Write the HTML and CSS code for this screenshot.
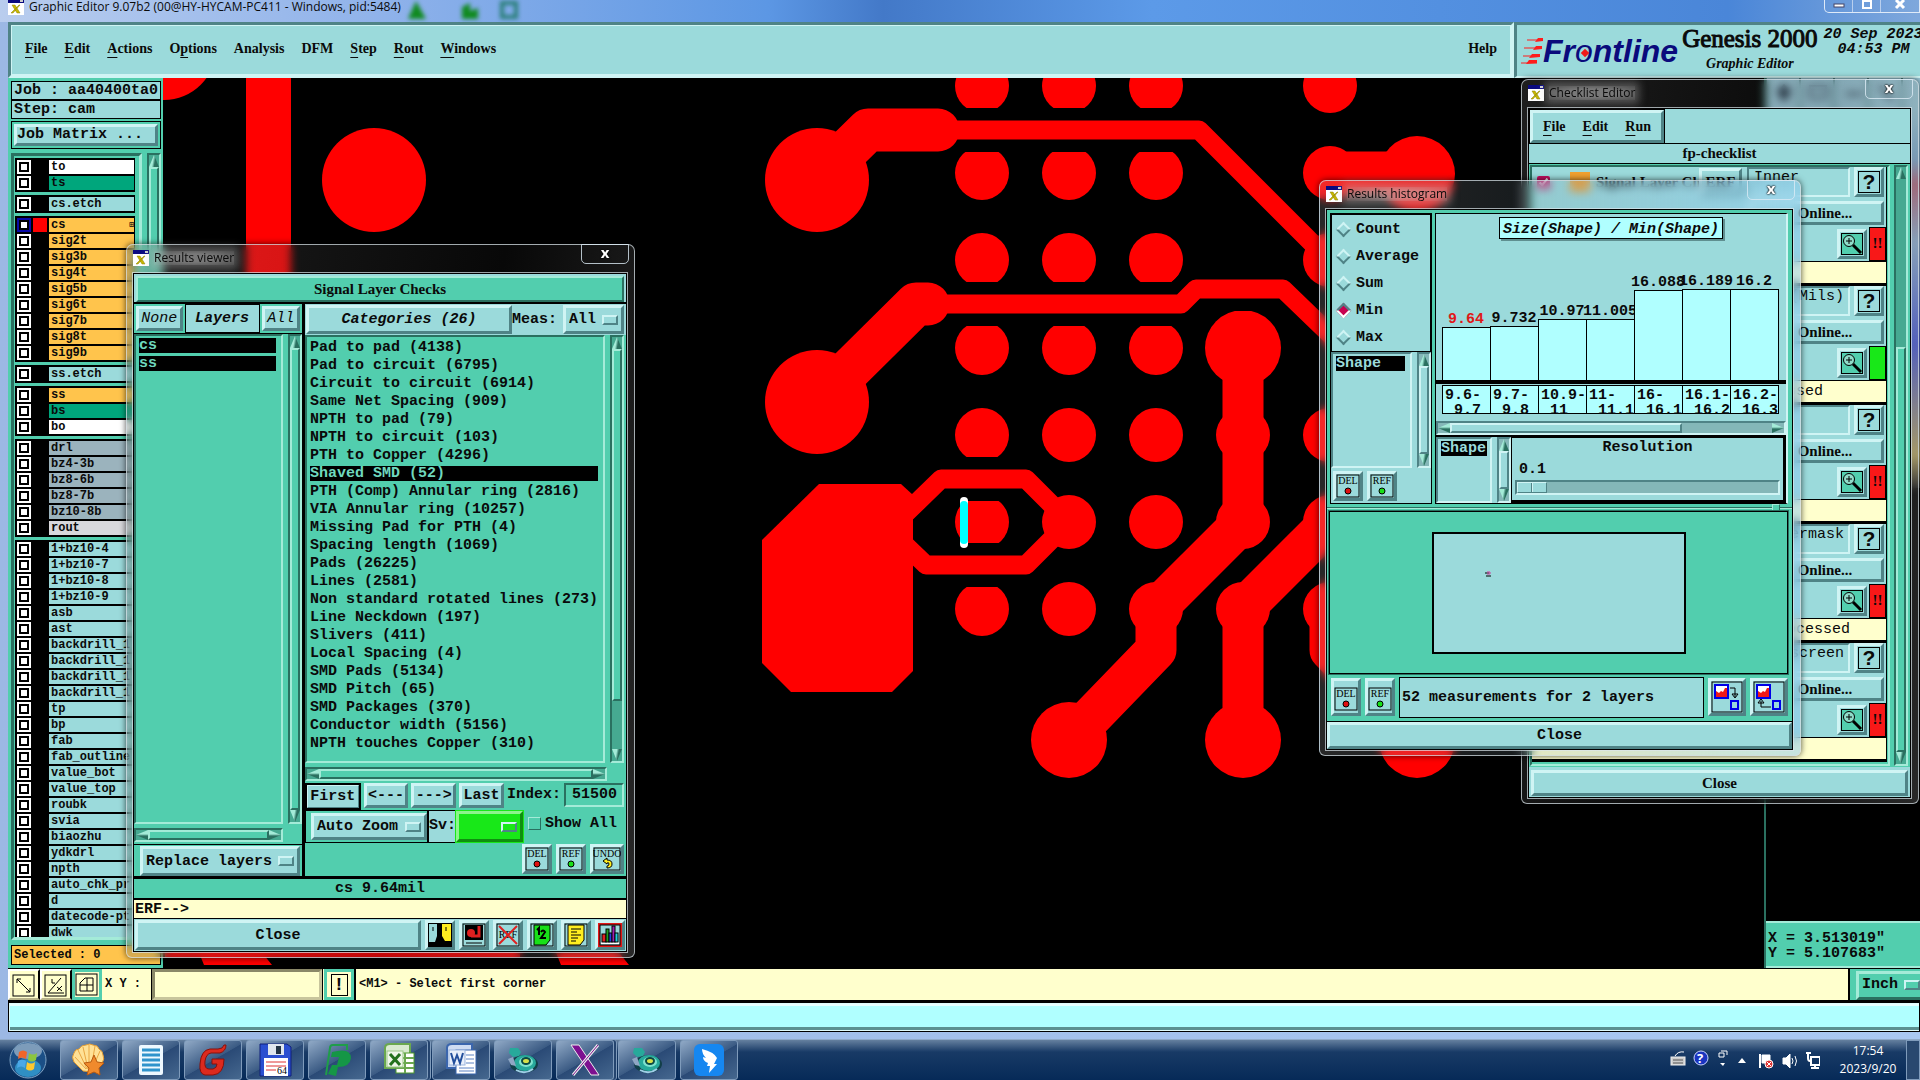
FILE: index.html
```html
<!DOCTYPE html>
<html lang="en">
<head>
    <meta charset="UTF-8">
    <meta name="viewport" content="width=device-width, initial-scale=1.0">
    <title>Graphic Editor</title>
    <link rel="stylesheet" href="styles.css">
</head>
<body>
    <!-- shared icons -->
    <svg class="defs" width="0" height="0">
        <symbol id="xwin" viewBox="0 0 16 16">
            <rect x="0" y="0" width="16" height="16" fill="#fff"/>
            <rect x="0" y="0" width="16" height="4" fill="#0a0a80"/>
            <rect x="12" y="1" width="3" height="2" fill="#ccc"/>
            <path d="M4 6h3l5 8H9zM11 6h1l-7 8H3z" fill="#c9b800" stroke="#8a8000" stroke-width=".5"/>
        </symbol>
        <symbol id="del" viewBox="0 0 24 24">
            <rect x="1" y="1" width="22" height="22" fill="none" stroke="#000"/>
            <text x="12" y="10" class="tiny">DEL</text>
            <circle cx="12" cy="17" r="3" fill="#e01010" stroke="#000"/>
        </symbol>
        <symbol id="ref" viewBox="0 0 24 24">
            <rect x="1" y="1" width="22" height="22" fill="none" stroke="#000"/>
            <text x="12" y="10" class="tiny">REF</text>
            <circle cx="12" cy="17" r="3" fill="#18e018" stroke="#000"/>
        </symbol>
        <symbol id="lens" viewBox="0 0 22 22">
            <rect x=".5" y=".5" width="21" height="21" fill="#52ceae" stroke="#000"/>
            <circle cx="8" cy="8" r="5.5" fill="#8fdcc9" stroke="#000"/>
            <path d="M8 5v6M5 8h6" stroke="#000"/>
            <path d="M12 12l8 8" stroke="#000" stroke-width="3"/>
        </symbol>
        <symbol id="duck" viewBox="0 0 32 32">
            <ellipse cx="17" cy="20" rx="14" ry="9" fill="#123f49"/>
            <ellipse cx="18" cy="19" rx="11" ry="8" fill="#27a99b"/>
            <ellipse cx="19" cy="18" rx="7" ry="5" fill="#7fe3cf"/>
            <ellipse cx="19" cy="17" rx="4" ry="3" fill="#d7e04a" stroke="#0b4a44" stroke-width="2"/>
            <path d="M3 4h8l3 4-2 4-6 1-4-4z" fill="#27a99b"/>
            <path d="M1 15l5-2 3 9-5-1z" fill="#8fa6c4"/>
            <path d="M9 26q9 5 17-1" stroke="#9fd0e8" stroke-width="2" fill="none"/>
        </symbol>
    </svg>

    <main class="app">
        <header class="titlebar">
            <svg class="xicon" width="16" height="16"><use href="#xwin"/></svg>
            <span>Graphic Editor 9.07b2 (00@HY-HYCAM-PC411 - Windows, pid:5484)</span>
            <svg class="ghost" width="140" height="20">
                <path d="M10 0l10 18H2zM56 18V6l8-4v8l8-3v11z" fill="#108a20"/>
                <rect x="96" y="2" width="14" height="14" fill="none" stroke="#2a7f78" stroke-width="4"/>
            </svg>
            <div class="sysbtns">
                <button aria-label="Minimize">
                    <svg width="12" height="12"><rect x="1" y="4" width="10" height="3" fill="#fff" stroke="#446"/></svg>
                </button>
                <button aria-label="Restore">
                    <svg width="12" height="12"><rect x="2" y="1" width="8" height="7" fill="none" stroke="#fff" stroke-width="2"/></svg>
                </button>
                <button class="wide" aria-label="Close window">
                    <svg width="12" height="12"><path d="M2 0l8 8M10 0l-8 8" stroke="#fff" stroke-width="3"/></svg>
                </button>
            </div>
        </header>

        <div class="top">
            <nav class="menubar">
                <button><u>F</u>ile</button>
                <button><u>E</u>dit</button>
                <button><u>A</u>ctions</button>
                <button>O<u>p</u>tions</button>
                <button>Analysis</button>
                <button>DFM</button>
                <button><u>S</u>tep</button>
                <button><u>R</u>out</button>
                <button><u>W</u>indows</button>
                <button class="help">Help</button>
            </nav>
            <div class="brand">
                <div class="logo">
                    <svg width="22" height="28">
                        <path d="M6 3h16M3 11h18M2 19h16M0 26h16" stroke="#ff1c1c" stroke-width="1"/>
                        <path d="M14 5l3-4h5v3zM12 13l3-4h6v3zM8 21l3-4h8v3zM5 27l3-4h8v3z" fill="#ff1c1c"/>
                    </svg>
                    <span class="wordmark">Fr<span class="ring">o</span>ntline</span>
                </div>
                <div class="product">
                    <p class="genesis">Genesis 2000</p>
                    <p class="sub">Graphic Editor</p>
                </div>
                <div class="date">
                    <p>20 Sep 2023</p>
                    <p>04:53 PM</p>
                </div>
            </div>
        </div>

        <div class="work">
            <aside class="sidebar">
                <p class="job">Job : aa40400ta0</p>
                <p class="job">Step: cam</p>
                <div class="matrix"><button class="bevel">Job Matrix ...</button></div>
                <div class="layers-wrap">
                    <div class="layers">
                        <div class="group">
                            <label><input type="checkbox"><i></i><span class="white">to</span></label>
                            <label><input type="checkbox"><i></i><span class="jade">ts</span></label>
                        </div>
                        <div class="group">
                            <label><input type="checkbox"><i></i><span>cs.etch</span></label>
                        </div>
                        <div class="group">
                            <label class="active"><input type="checkbox"><i></i><span class="orange">cs<b>⊞</b></span></label>
                            <label><input type="checkbox"><i></i><span class="orange">sig2t</span></label>
                            <label><input type="checkbox"><i></i><span class="orange">sig3b</span></label>
                            <label><input type="checkbox"><i></i><span class="orange">sig4t</span></label>
                            <label><input type="checkbox"><i></i><span class="orange">sig5b</span></label>
                            <label><input type="checkbox"><i></i><span class="orange">sig6t</span></label>
                            <label><input type="checkbox"><i></i><span class="orange">sig7b</span></label>
                            <label><input type="checkbox"><i></i><span class="orange">sig8t</span></label>
                            <label><input type="checkbox"><i></i><span class="orange">sig9b</span></label>
                        </div>
                        <div class="group">
                            <label><input type="checkbox"><i></i><span>ss.etch</span></label>
                        </div>
                        <div class="group">
                            <label><input type="checkbox"><i></i><span class="orange">ss</span></label>
                            <label><input type="checkbox"><i></i><span class="jade">bs</span></label>
                            <label><input type="checkbox"><i></i><span class="white">bo</span></label>
                        </div>
                        <div class="group">
                            <label><input type="checkbox"><i></i><span class="slate">drl</span></label>
                            <label><input type="checkbox"><i></i><span class="slate">bz4-3b</span></label>
                            <label><input type="checkbox"><i></i><span class="slate">bz8-6b</span></label>
                            <label><input type="checkbox"><i></i><span class="slate">bz8-7b</span></label>
                            <label><input type="checkbox"><i></i><span class="slate">bz10-8b</span></label>
                            <label><input type="checkbox"><i></i><span class="gray">rout</span></label>
                        </div>
                        <div class="group">
                            <label><input type="checkbox"><i></i><span>1+bz10-4</span></label>
                            <label><input type="checkbox"><i></i><span>1+bz10-7</span></label>
                            <label><input type="checkbox"><i></i><span>1+bz10-8</span></label>
                            <label><input type="checkbox"><i></i><span>1+bz10-9</span></label>
                            <label><input type="checkbox"><i></i><span>asb</span></label>
                            <label><input type="checkbox"><i></i><span>ast</span></label>
                            <label><input type="checkbox"><i></i><span>backdrill_1</span></label>
                            <label><input type="checkbox"><i></i><span>backdrill_1</span></label>
                            <label><input type="checkbox"><i></i><span>backdrill_1</span></label>
                            <label><input type="checkbox"><i></i><span>backdrill_1</span></label>
                            <label><input type="checkbox"><i></i><span>tp</span></label>
                            <label><input type="checkbox"><i></i><span>bp</span></label>
                            <label><input type="checkbox"><i></i><span>fab</span></label>
                            <label><input type="checkbox"><i></i><span>fab_outline</span></label>
                            <label><input type="checkbox"><i></i><span>value_bot</span></label>
                            <label><input type="checkbox"><i></i><span>value_top</span></label>
                            <label><input type="checkbox"><i></i><span>roubk</span></label>
                            <label><input type="checkbox"><i></i><span>svia</span></label>
                            <label><input type="checkbox"><i></i><span>biaozhu</span></label>
                            <label><input type="checkbox"><i></i><span>ydkdrl</span></label>
                            <label><input type="checkbox"><i></i><span>npth</span></label>
                            <label><input type="checkbox"><i></i><span>auto_chk_pr</span></label>
                            <label><input type="checkbox"><i></i><span>d</span></label>
                            <label><input type="checkbox"><i></i><span>datecode-pt</span></label>
                            <label><input type="checkbox"><i></i><span>dwk</span></label>
                        </div>
                    </div>
                    <div class="vscroll"><i class="up"></i><i class="thumb"></i><i class="down"></i></div>
                </div>
                <p class="selected">Selected : 0</p>
            </aside>

            <div class="canvas">
                <svg width="100%" height="100%">
                    <g transform="translate(-163 -78)" fill="#f00">
                        <circle cx="164" cy="48" r="52"/>
                        <rect x="246" y="70" width="45" height="840"/>
                        <circle cx="374" cy="180" r="52"/>
                        <path d="M165 900h355v57H165zM198 950h62l12 15h-68zM555 950h62l12 15h-68z"/>
                        <!-- bga pads -->
                        <g>
                            <circle cx="982" cy="86" r="27"/><circle cx="1069" cy="86" r="27"/><circle cx="1156" cy="86" r="27"/>
                            <circle cx="982" cy="173" r="27"/><circle cx="1069" cy="173" r="27"/><circle cx="1156" cy="173" r="27"/>
                            <circle cx="982" cy="260" r="27"/><circle cx="1069" cy="260" r="27"/><circle cx="1156" cy="260" r="27"/>
                            <circle cx="982" cy="348" r="27"/><circle cx="1069" cy="348" r="27"/><circle cx="1156" cy="348" r="27"/>
                            <circle cx="982" cy="435" r="27"/><circle cx="982" cy="522" r="27"/><circle cx="982" cy="609" r="27"/>
                            <circle cx="1243" cy="348" r="38"/>
                        </g>
                        <!-- clearance around the traces -->
                        <g fill="none" stroke="#000" stroke-width="44">
                            <path d="M938 130H1199L1330 261M928 304H1181L1196 289H1283L1330 336"/>
                            <path d="M905 514L941 479H1026L1050 503M900 540L926 565H1026L1050 541"/>
                        </g>
                        <g>
                            <circle cx="1069" cy="435" r="27"/><circle cx="1156" cy="435" r="27"/><circle cx="1243" cy="435" r="27"/>
                            <circle cx="1069" cy="522" r="27"/><circle cx="1156" cy="522" r="27"/><circle cx="1243" cy="522" r="27"/>
                            <circle cx="1069" cy="609" r="27"/><circle cx="1156" cy="609" r="27"/><circle cx="1243" cy="609" r="27"/>
                            <circle cx="1330" cy="86" r="27"/><circle cx="1330" cy="173" r="27"/><circle cx="1330" cy="260" r="27"/>
                            <circle cx="1330" cy="435" r="27"/><circle cx="1330" cy="522" r="27"/><circle cx="1330" cy="609" r="27"/>
                            <circle cx="817" cy="180" r="52"/><circle cx="817" cy="402" r="52"/>
                            <circle cx="1069" cy="740" r="38"/><circle cx="1243" cy="740" r="38"/>
                            <circle cx="1417" cy="740" r="38"/><circle cx="1417" cy="174" r="38"/>
                            <path d="M819 484H901L913 495V671L892 692H791L762 663V540z"/>
                        </g>
                        <g fill="none" stroke="#f00" stroke-linejoin="round" stroke-linecap="round">
                            <g stroke-width="43">
                                <path d="M817 180L868 130H938M817 402L916 304H928"/>
                                <path d="M1330 173H1417"/>
                            </g>
                            <g stroke-width="41">
                                <path d="M1243 348V522L1156 609V650L1069 740"/>
                                <path d="M1330 522L1243 609V740M1330 609V650L1417 740"/>
                            </g>
                            <g stroke-width="19">
                                <path d="M938 130H1199L1330 261M928 304H1181L1196 289H1283L1340 344"/>
                                <path d="M905 514L941 479H1026L1069 522M900 540L926 565H1026L1069 522"/>
                            </g>
                        </g>
                        <path d="M964 501V544" stroke="#fff" stroke-width="8" stroke-linecap="round"/>
                        <path d="M964 505V540" stroke="#0ff" stroke-width="8" stroke-linecap="round"/>
                    </g>
                </svg>
            </div>

            <aside class="rightbar">
                <div class="tools">
                    <svg width="156" height="34">
                        <path d="M0 0v34M34 0v34M68 0v34M102 0v34M136 0v34" stroke="#4f8082" stroke-width="2"/>
                        <path d="M18 6l9 9h-5v7h-8v-7H9z" fill="#234"/>
                        <rect x="44" y="8" width="16" height="12" fill="none" stroke="#345" stroke-width="2"/>
                        <path d="M80 16h16M114 8l12 14" stroke="#345" stroke-width="3"/>
                    </svg>
                </div>
                <div class="overview"></div>
                <div class="coords">
                    <p>X = 3.513019"</p>
                    <p>Y = 5.107683"</p>
                </div>
            </aside>
        </div>

        <div class="prompt">
            <button class="tool" aria-label="Snap corner">
                <svg width="24" height="24" fill="none" stroke="#000"><rect x="1" y="1" width="21" height="21"/><path d="M5 5l13 13M5 9V5h4M18 14v4h-4"/></svg>
            </button>
            <button class="tool" aria-label="Angle">
                <svg width="24" height="24" fill="none" stroke="#000"><rect x="1" y="1" width="21" height="21"/><path d="M4 19L17 4M4 19h16M8 5v4h3M13 17l5-5M13 13l5 4"/></svg>
            </button>
            <button class="tool on" aria-label="Grid">
                <svg width="24" height="24" fill="none" stroke="#000"><rect x="1" y="1" width="21" height="21"/><path d="M5 18V10l5-5h8v13zM5 12h13M12 5v13"/></svg>
            </button>
            <label for="xy">X Y :</label>
            <input id="xy" type="text">
            <button class="tool on bang"><span>!</span></button>
            <p class="msg">&lt;M1&gt; - Select first corner</p>
            <span class="unit"><span class="option green"><select aria-label="Units"><option>Inch</option></select></span></span>
        </div>
        <div class="status"><div></div></div>
    </main>

    <footer class="taskbar">
        <button class="orb" aria-label="Start">
            <svg width="38" height="38" viewBox="0 0 38 38">
                <circle cx="19" cy="19" r="18" fill="#1b4f86" stroke="#7fa3c4"/>
                <ellipse cx="19" cy="27" rx="13" ry="9" fill="#2f8fc4"/>
                <ellipse cx="19" cy="10" rx="14" ry="8" fill="#7d9cba"/>
                <path d="M10 11q4-3 8 0l-1 7q-4-3-8 0z" fill="#f0652a"/>
                <path d="M20 12q4 3 8 0l-1 7q-4 3-8 0z" fill="#8cc63e"/>
                <path d="M9 20q4-3 8 0l-1 7q-4-3-8 0z" fill="#4aa8e8"/>
                <path d="M18 21q4 3 8 0l-1 7q-4 3-8 0z" fill="#fdc82f"/>
            </svg>
        </button>
        <button aria-label="Shell">
            <svg width="34" height="34" viewBox="0 0 34 34">
                <path d="M11 28L2 19Q-1 14 2 10 3 6 7 6q2-4 7-4 4-2 7 0 5 0 6 4 4 2 4 6 2 4-1 8L20 29z" fill="#ffe196" stroke="#e09a32"/>
                <path d="M14 26L3 14M15 26L6 7M16 26L11 4M17 26V2M19 26l4-23M21 24l7-16" stroke="#e9a742"/>
                <path d="M22 12l3 7 7 1-5 5 1 7-6-3-7 3 2-7-5-5 7-1z" fill="#f08a2c" stroke="#b85a10"/>
            </svg>
        </button>
        <button aria-label="Notes">
            <svg width="28" height="32"><rect x="2" y="1" width="24" height="30" rx="2" fill="#eef8ff"/><path d="M5 6h18M5 11h18M5 16h18M5 21h18M5 26h18" stroke="#2f93cc" stroke-width="3"/></svg>
        </button>
        <button aria-label="Genesis">
            <svg width="30" height="32"><path d="M28 1q0 6-6 8h-9q-5 1-6 8-1 8 4 8h4q4-1 4-5h-5v-5h12q0 15-11 16H7Q1 30 2 20 3 6 12 5h8q5 0 6-4z" fill="#dc2a1e" stroke="#8a100a"/></svg>
        </button>
        <button aria-label="Save">
            <svg width="34" height="34">
                <path d="M2 1h27l4 3v29H2z" fill="#2a4fd0" stroke="#10207a"/>
                <rect x="10" y="1" width="16" height="11" fill="#dfe6ee"/><rect x="18" y="3" width="5" height="8" fill="#234"/>
                <rect x="6" y="15" width="24" height="18" fill="#fff"/>
                <path d="M8 19h20M8 23h20M8 27h10" stroke="#d33"/>
                <text x="24" y="31" class="tiny">64</text>
            </svg>
        </button>
        <button aria-label="Project">
            <svg width="32" height="34"><path d="M5 32L9 5q0-3 3-3h14v5" fill="none" stroke="#1f9d4a" stroke-width="2"/><path d="M11 9q19-5 19 6-1 9-13 9l-2 9-8-2 4-9h5l2-8h-8z" fill="#159646"/></svg>
        </button>
        <button class="stack" aria-label="Excel">
            <svg width="34" height="34">
                <path d="M3 5q0-4 5-4h20v24H3z" fill="#d9ead0" stroke="#6aa84f" stroke-width="2"/>
                <rect x="14" y="10" width="18" height="20" fill="#fff" stroke="#4c9a2a"/>
                <path d="M14 15h18M14 20h18M14 25h18M23 10v20" stroke="#6aa84f" stroke-width="2"/>
                <rect x="5" y="8" width="16" height="16" fill="#eef6ea" stroke="#9cc889"/><path d="M8 11l10 11M18 11L8 22" stroke="#23711d" stroke-width="3"/>
            </svg>
        </button>
        <button aria-label="Word">
            <svg width="34" height="34">
                <path d="M3 5q0-4 5-4h20v24H3z" fill="#cfdcf2" stroke="#3b66ad" stroke-width="2"/>
                <rect x="12" y="7" width="20" height="24" fill="#fff" stroke="#3b66ad"/>
                <path d="M22 12h8M22 16h8M22 20h8M15 25h15M15 28h15" stroke="#5c83c4"/>
                <rect x="5" y="7" width="16" height="15" fill="#e9f0fb" stroke="#9cb5dd"/><path d="M7 10l3 10 3-8 3 8 3-10" fill="none" stroke="#234f9c" stroke-width="2"/>
            </svg>
        </button>
        <button aria-label="Editor"><svg width="34" height="32"><use href="#duck"/></svg></button>
        <button class="stack" aria-label="X server">
            <svg width="34" height="34"><path d="M3 2h8l20 30h-8z" fill="#7d1090" stroke="#eee"/><path d="M30 2L5 32" stroke="#eee" stroke-width="3"/><path d="M30 2L5 32" stroke="#7d1090"/></svg>
        </button>
        <button aria-label="Editor 2"><svg width="34" height="32"><use href="#duck"/></svg></button>
        <button aria-label="DingTalk">
            <svg width="30" height="32"><rect width="30" height="32" rx="6" fill="#1687f0"/><path d="M8 5q12 3 15 9l-3 6h3l-8 9 1-7h-3l1-3q-5-2-5-6l3 1Q8 10 8 5z" fill="#fff"/></svg>
        </button>

        <div class="tray">
            <svg width="150" height="24" fill="none" stroke="#fff">
                <rect x="1" y="9" width="14" height="8" fill="#ccc" stroke="#eee"/><path d="M3 12h10M3 15h10" stroke="#555"/><path d="M5 8q3-5 9-4"/>
                <circle cx="31" cy="10" r="7" fill="#1a34c0" stroke="#c9d4ff"/>
                <path d="M49 5h5v4h-5zM51 3h6v4" /><path d="M50 15h5l-2 3z" fill="#fff" stroke="none"/>
                <path d="M68 15h8l-4-5z" fill="#fff" stroke="none"/>
                <path d="M90 6v14" stroke-width="2"/><path d="M92 7h8v8h-8z" fill="#fff"/><circle cx="99" cy="16" r="4" fill="#d33"/><path d="M97 14l4 4M101 14l-4 4"/>
                <path d="M113 10h3l4-4v14l-4-4h-3z" fill="#fff"/><path d="M122 10q2 3 0 6M125 8q3 5 0 10"/>
                <path d="M141 9h9v8h-9zM141 20h8M145 17v3M138 5v5q0 3 2 3M136 5h5" stroke-width="2"/>
            </svg>
            <span class="qmark">?</span>
        </div>
        <div class="clock"><p>17:54</p><p>2023/9/20</p></div>
        <button class="peek" aria-label="Show desktop"></button>
    </footer>

    <!-- Results viewer -->
    <section class="win viewer">
        <div class="wtitle">
            <svg width="16" height="16"><use href="#xwin"/></svg><span>Results viewer</span>
            <button class="x dark">x</button>
        </div>
        <div class="wbody">
            <h2 class="check-title"><span>Signal Layer Checks</span></h2>
            <div class="cols">
                <div class="lcol">
                    <div class="lhead">
                        <button class="bevel">None</button>
                        <b>Layers</b>
                        <button class="bevel">All</button>
                    </div>
                    <div class="pane">
                        <ul class="list">
                            <li class="sel">cs</li>
                            <li class="sel">ss</li>
                        </ul>
                        <div class="vscroll"><i class="up"></i><i class="thumb"></i><i class="down"></i></div>
                    </div>
                    <div class="hscroll"><i class="left"></i><i class="thumb"></i><i class="right"></i></div>
                    <div class="replace">
                        <span class="option"><select aria-label="Layer mode"><option>Replace layers</option></select></span>
                    </div>
                </div>
                <div class="rcol">
                    <div class="rhead">
                        <button class="bevel">Categories (26)</button>
                        <label for="meas">Meas:</label>
                        <span class="option"><select id="meas"><option>All</option></select></span>
                    </div>
                    <div class="pane">
                        <ul class="list">
                            <li>Pad to pad (4138)</li>
                            <li>Pad to circuit (6795)</li>
                            <li>Circuit to circuit (6914)</li>
                            <li>Same Net Spacing (909)</li>
                            <li>NPTH to pad (79)</li>
                            <li>NPTH to circuit (103)</li>
                            <li>PTH to Copper (4296)</li>
                            <li class="sel">Shaved SMD (52)</li>
                            <li>PTH (Comp) Annular ring (2816)</li>
                            <li>VIA Annular ring (10257)</li>
                            <li>Missing Pad for PTH (4)</li>
                            <li>Spacing length (1069)</li>
                            <li>Pads (26225)</li>
                            <li>Lines (2581)</li>
                            <li>Non standard rotated lines (273)</li>
                            <li>Line Neckdown (197)</li>
                            <li>Slivers (411)</li>
                            <li>Local Spacing (4)</li>
                            <li>SMD Pads (5134)</li>
                            <li>SMD Pitch (65)</li>
                            <li>SMD Packages (370)</li>
                            <li>Conductor width (5156)</li>
                            <li>NPTH touches Copper (310)</li>
                        </ul>
                        <div class="vscroll part"><i class="up"></i><i class="thumb"></i><i class="down"></i></div>
                    </div>
                    <div class="hscroll"><i class="left"></i><i class="thumb"></i><i class="right"></i></div>
                    <div class="navrow">
                        <button class="bevel first">First</button>
                        <button class="bevel">&lt;---</button>
                        <button class="bevel">---&gt;</button>
                        <button class="bevel">Last</button>
                        <label for="idx">Index:</label>
                        <input id="idx" type="text" value="51500">
                    </div>
                    <div class="zoomrow">
                        <span class="cell"><span class="option"><select aria-label="Zoom"><option>Auto Zoom</option></select></span></span>
                        <span class="cell sv"><label for="sv">Sv:</label><span class="option lime"><select id="sv"><option></option></select></span></span>
                        <label class="showall"><input type="checkbox">Show All</label>
                    </div>
                    <div class="iconrow">
                        <button class="ibtn bevel" aria-label="Delete"><svg width="24" height="24"><use href="#del"/></svg></button>
                        <button class="ibtn bevel" aria-label="Reference"><svg width="24" height="24"><use href="#ref"/></svg></button>
                        <button class="ibtn bevel undo" aria-label="Undo">
                            <svg width="28" height="24"><rect x="1" y="1" width="26" height="22" fill="none" stroke="#000"/><text x="14" y="10" class="tiny">UNDO</text><path d="M10 14l4-3v2q5 0 5 4t-5 4v-2q2 0 2-2t-2-1v1z" fill="#ffee20" stroke="#000"/></svg>
                        </button>
                    </div>
                </div>
            </div>
            <p class="measure">cs 9.64mil</p>
            <p class="erf">ERF--&gt;</p>
            <div class="closerow">
                <button class="bevel close">Close</button>
                <button class="ibtn bevel" aria-label="Contrast">
                    <svg width="24" height="24"><rect width="24" height="24" fill="#000"/><path d="M1 1h8v12l-2 6H1z" fill="#9bdadb"/><path d="M14 1h9v17h-6l-3-5z" fill="#ffee20"/><path d="M5 4v4M18 4v4" stroke="#000"/></svg>
                </button>
                <button class="ibtn bevel" aria-label="Highlight">
                    <svg width="24" height="24"><rect x="1" y="1" width="22" height="22" fill="#9bdadb" stroke="#000"/><rect x="3" y="2" width="18" height="15" fill="#000"/><circle cx="9" cy="10" r="4" fill="#e02020"/><path d="M9 13h8V3" fill="none" stroke="#e02020" stroke-width="3"/><path d="M4 20h16" stroke="#000"/></svg>
                </button>
                <button class="ibtn bevel" aria-label="Hide references">
                    <svg width="24" height="24"><rect x="1" y="1" width="22" height="22" fill="none" stroke="#000"/><text x="12" y="15" class="tiny">REF</text><path d="M3 3l18 18M21 3L3 21" stroke="#e02020" stroke-width="2"/></svg>
                </button>
                <button class="ibtn bevel" aria-label="Pages">
                    <svg width="24" height="24"><rect x="1" y="1" width="22" height="22" fill="none" stroke="#000"/><path d="M4 2h16v15l-4 5H4z" fill="#18e018" stroke="#000"/><path d="M7 7l2-2v7M11 9q2-3 4 0l-4 6h5" fill="none" stroke="#000" stroke-width="2"/></svg>
                </button>
                <button class="ibtn bevel" aria-label="Report">
                    <svg width="24" height="24"><rect x="1" y="1" width="22" height="22" fill="none" stroke="#000"/><path d="M4 2h16v15l-4 5H4z" fill="#ffee20" stroke="#000"/><path d="M7 6h10M7 9h6M7 12h10M7 15h7M7 18h5" stroke="#000"/></svg>
                </button>
                <button class="ibtn bevel hot" aria-label="Histogram">
                    <svg width="24" height="24"><rect width="24" height="24" fill="#e01818"/><rect x="2" y="2" width="20" height="20" fill="#9bdadb" stroke="#000"/><path d="M3 20h18" stroke="#fff" stroke-width="2"/><g stroke="#000"><rect x="4" y="11" width="4" height="8" fill="#e02020"/><rect x="8" y="6" width="3" height="13" fill="#20a020"/><rect x="11" y="10" width="3" height="9" fill="#2040e0"/><rect x="14" y="3" width="3" height="16" fill="#a020b0"/><rect x="17" y="10" width="3" height="9" fill="#20d0e0"/></g></svg>
                </button>
            </div>
        </div>
    </section>

    <!-- Checklist Editor -->
    <section class="win checklist">
        <div class="wtitle">
            <svg width="16" height="16"><use href="#xwin"/></svg><span>Checklist Editor</span>
            <button class="x">x</button>
        </div>
        <div class="wbody">
            <nav class="cmenu">
                <div class="bevel">
                    <button><u>F</u>ile</button>
                    <button><u>E</u>dit</button>
                    <button><u>R</u>un</button>
                </div>
            </nav>
            <h2 class="cname">fp-checklist</h2>
            <div class="citems-wrap">
                <div class="citems">
                    <article>
                        <div class="r1">
                            <input type="checkbox" checked aria-label="Run check"><i class="ico"></i><b>Signal Layer Ch</b><button class="bevel erfbtn">ERF</button>
                            <input type="text" aria-label="Comment" value="Inner"><button class="bevel q"><span>?</span></button>
                        </div>
                        <button class="bevel online">Online...</button>
                        <div class="r3"><button class="ibtn bevel" aria-label="View"><svg width="22" height="22"><use href="#lens"/></svg></button><i class="flag">!!</i></div>
                        <p></p>
                    </article>
                    <article>
                        <div class="r1"><input type="text" aria-label="Comment" value="Drl (Mils)"><button class="bevel q"><span>?</span></button></div>
                        <button class="bevel online">Online...</button>
                        <div class="r3"><button class="ibtn bevel" aria-label="View"><svg width="22" height="22"><use href="#lens"/></svg></button><i class="flag ok"></i></div>
                        <p class="far">Processed</p>
                    </article>
                    <article>
                        <div class="r1"><input type="text" aria-label="Comment"><button class="bevel q"><span>?</span></button></div>
                        <button class="bevel online">Online...</button>
                        <div class="r3"><button class="ibtn bevel" aria-label="View"><svg width="22" height="22"><use href="#lens"/></svg></button><i class="flag">!!</i></div>
                        <p></p>
                    </article>
                    <article>
                        <div class="r1"><input type="text" aria-label="Comment" value="Soldermask"><button class="bevel q"><span>?</span></button></div>
                        <button class="bevel online">Online...</button>
                        <div class="r3"><button class="ibtn bevel" aria-label="View"><svg width="22" height="22"><use href="#lens"/></svg></button><i class="flag">!!</i></div>
                        <p>Processed</p>
                    </article>
                    <article>
                        <div class="r1"><input type="text" aria-label="Comment" value="Silkscreen"><button class="bevel q"><span>?</span></button></div>
                        <button class="bevel online">Online...</button>
                        <div class="r3"><button class="ibtn bevel" aria-label="View"><svg width="22" height="22"><use href="#lens"/></svg></button><i class="flag">!!</i></div>
                        <p></p>
                    </article>
                </div>
                <div class="vscroll low"><i class="up"></i><i class="thumb"></i><i class="down"></i></div>
            </div>
            <button class="bevel cclose">Close</button>
        </div>
    </section>

    <!-- Results histogram -->
    <section class="win histo">
        <div class="wtitle">
            <svg width="16" height="16"><use href="#xwin"/></svg><span>Results histogram</span>
            <button class="x">x</button>
        </div>
        <div class="wbody">
            <div class="hgrid">
                <div class="hleft">
                    <fieldset>
                        <label><input type="radio" name="stat">Count</label>
                        <label><input type="radio" name="stat">Average</label>
                        <label><input type="radio" name="stat">Sum</label>
                        <label><input type="radio" name="stat" checked>Min</label>
                        <label><input type="radio" name="stat">Max</label>
                    </fieldset>
                    <div class="pane pale">
                        <ul class="list"><li class="sel">Shape</li></ul>
                        <div class="vscroll"><i class="up"></i><i class="thumb"></i><i class="down"></i></div>
                    </div>
                    <div class="hicons">
                        <button class="ibtn bevel" aria-label="Delete"><svg width="24" height="24"><use href="#del"/></svg></button>
                        <button class="ibtn bevel" aria-label="Reference"><svg width="24" height="24"><use href="#ref"/></svg></button>
                    </div>
                </div>
                <div class="hright">
                    <div class="chart">
                        <h3>Size(Shape) / Min(Shape)</h3>
                        <div class="bars">
                            <div class="bar red"><span>9.64</span><i style="height: 53px"></i></div>
                            <div class="bar"><span>9.732</span><i style="height: 54px"></i></div>
                            <div class="bar"><span>10.97</span><i style="height: 61px"></i></div>
                            <div class="bar"><span>11.005</span><i style="height: 61px"></i></div>
                            <div class="bar"><span>16.088</span><i style="height: 90px"></i></div>
                            <div class="bar"><span>16.189</span><i style="height: 91px"></i></div>
                            <div class="bar"><span>16.2</span><i style="height: 91px"></i></div>
                        </div>
                        <div class="ranges">
                            <p>9.6-<span>9.7</span></p>
                            <p>9.7-<span>9.8</span></p>
                            <p>10.9-<span>11</span></p>
                            <p>11-<span>11.1</span></p>
                            <p>16-<span>16.1</span></p>
                            <p>16.1-<span>16.2</span></p>
                            <p>16.2-<span>16.3</span></p>
                        </div>
                        <div class="hscroll pale part"><i class="left"></i><i class="thumb"></i><i class="right"></i></div>
                    </div>
                    <div class="res">
                        <div class="pane pale">
                            <ul class="list"><li class="sel">Shape</li></ul>
                            <div class="vscroll"><i class="up"></i><i class="thumb"></i><i class="down"></i></div>
                        </div>
                        <div class="slider">
                            <label for="res">Resolution</label>
                            <output for="res">0.1</output>
                            <input id="res" type="range" value="0">
                        </div>
                    </div>
                </div>
            </div>
            <div class="split"><i></i></div>
            <div class="map">
                <div class="board">
                    <svg width="100%" height="100%"><path d="M51 39h4M52 42h5" stroke="#000"/><path d="M53 38h3v2h-3" stroke="#d040a0" fill="none"/></svg>
                </div>
            </div>
            <div class="hbottom">
                <button class="ibtn bevel" aria-label="Delete"><svg width="24" height="24"><use href="#del"/></svg></button>
                <button class="ibtn bevel" aria-label="Reference"><svg width="24" height="24"><use href="#ref"/></svg></button>
                <p>52 measurements for 2 layers</p>
                <button class="ibtn bevel" aria-label="Zoom in selection">
                    <svg width="32" height="32"><rect x="1" y="1" width="30" height="30" fill="none" stroke="#000"/><rect x="4" y="4" width="13" height="13" fill="#fff" stroke="#0000e8" stroke-width="2"/><path d="M5 16V10l3 2 2-2 2 1 2-4h2v9z" fill="#f01818"/><rect x="20" y="20" width="7" height="8" fill="none" stroke="#0000e8" stroke-width="2"/><path d="M19 7h5v9M21 13l3 4 3-4z" fill="none" stroke="#000"/></svg>
                </button>
                <button class="ibtn bevel" aria-label="Zoom out selection">
                    <svg width="32" height="32"><rect x="1" y="1" width="30" height="30" fill="none" stroke="#000"/><rect x="4" y="4" width="13" height="13" fill="#fff" stroke="#0000e8" stroke-width="2"/><path d="M5 16V10l3 2 2-2 2 1 2-4h2v9z" fill="#f01818"/><rect x="20" y="20" width="7" height="8" fill="none" stroke="#0000e8" stroke-width="2"/><path d="M18 26H8v-6M5 22l3-4 3 4z" fill="none" stroke="#000"/></svg>
                </button>
            </div>
            <button class="bevel hclose">Close</button>
        </div>
    </section>
</body>
</html>
```
FILE: styles.css
```css
* {
  box-sizing: border-box;
}

body {
  margin: 0;
  height: 100vh;
  overflow: hidden;
  display: flex;
  flex-direction: column;
  position: relative;
  background: #6f9fe0;
  font-family: "Liberation Mono", monospace;
  font-size: 15px;
  font-weight: bold;
  color: #0a0a0a;
}

p, h2, h3, ul {
  margin: 0;
  padding: 0;
  list-style: none;
  font-size: inherit;
}

button, input, select {
  font: inherit;
  color: inherit;
  margin: 0;
  padding: 0;
  border: none;
  border-radius: 0;
  background: none;
}

.defs {
  position: absolute;
}

.tiny {
  font: 10px "Liberation Serif", serif;
  text-anchor: middle;
  fill: #000;
  stroke: none;
}

.bevel {
  background: #9bdadb;
  border: 3px solid;
  border-color: #cff4f4 #4f8386 #4f8386 #cff4f4;
}

/* main window */
.app {
  flex: 1;
  min-height: 0;
  display: flex;
  flex-direction: column;
  padding: 0 0 7px 8px;
  background: linear-gradient(90deg, #9cb8e4, #a9c8f2);
}

.titlebar {
  height: 22px;
  margin-left: -8px;
  padding-left: 8px;
  display: flex;
  align-items: center;
  gap: 5px;
  background: linear-gradient(90deg, #b9cdee, #8fb2ea 20%, #5c97e4 40%, #4379c8 46%, #5c9ae8 60%, #4a86d8 90%, #7fa8dc);
  font: 12px/14px "Open Sans", sans-serif;
  position: relative;
}

.titlebar span,
.titlebar .xicon {
  margin-bottom: 8px;
}

.ghost {
  filter: blur(2px);
}

.sysbtns {
  position: absolute;
  right: 0;
  top: 0;
  display: flex;
  height: 13px;
  border: 1px solid #dfeaf8;
  border-top: none;
  border-radius: 0 0 0 5px;
}

.sysbtns button {
  width: 28px;
  border-right: 1px solid #b9cfee;
  line-height: 0;
}

.sysbtns .wide {
  width: 38px;
  border: none;
}

.top {
  display: flex;
  height: 56px;
  background: #9bdadb;
}

.menubar {
  flex: 1;
  display: flex;
  align-items: center;
  gap: 17px;
  padding: 0 14px 2px;
  border: 3px solid;
  border-color: #4f8386 #cff4f4 #cff4f4 #4f8386;
  outline: 1px solid #cff4f4;
  outline-offset: -4px;
  font: bold 14px/20px "Liberation Serif", serif;
}

.menubar .help {
  margin-left: auto;
}

u {
  text-underline-offset: 4px;
}

.brand {
  width: 406px;
  display: flex;
  overflow: hidden;
  border-top: 3px solid #4f8386;
  border-left: 3px solid #4f8386;
  border-bottom: 2px solid #cff4f4;
}

.logo {
  display: flex;
  align-items: center;
  padding-left: 4px;
}

.wordmark {
  font: italic bold 32px/36px "Liberation Sans", sans-serif;
  color: #0a0a7c;
}

.logo svg {
  flex: none;
}

.ring {
  position: relative;
  font-weight: normal;
}

.ring::after {
  content: "";
  position: absolute;
  left: 7px;
  top: 17px;
  width: 6px;
  height: 6px;
  background: #f01818;
  transform: rotate(45deg);
}

.product {
  text-align: center;
  white-space: nowrap;
  padding-left: 4px;
}

.genesis {
  font: 25px/28px "Liberation Serif", serif;
  -webkit-text-stroke: 1px #0a0a0a;
}

.sub {
  font: italic bold 14px/22px "Liberation Serif", serif;
}

.date {
  font-style: italic;
  line-height: 15px;
  padding: 2px 0 0 6px;
  white-space: nowrap;
}

.date p + p {
  padding-left: 14px;
}

.work {
  flex: 1;
  min-height: 0;
  display: flex;
}

/* layer list */
.sidebar {
  width: 155px;
  display: flex;
  flex-direction: column;
  background: #52ceae;
  padding: 3px 2px 3px 3px;
}

.job {
  height: 19px;
  line-height: 17px;
  border: 1px solid #000;
  background: #9bdadb;
  padding-left: 2px;
  white-space: nowrap;
}

.matrix {
  margin: 2px 0 4px;
  padding: 2px;
  border: 1px solid #000;
}

.matrix button {
  width: 100%;
  height: 22px;
  line-height: 16px;
  text-align: left;
}

.layers-wrap {
  flex: 1;
  min-height: 0;
  display: flex;
  gap: 5px;
}

.layers {
  flex: 1;
  overflow: hidden;
  border: 3px solid;
  border-color: #2a7060 #a4ebd8 #a4ebd8 #2a7060;
  padding: 2px 4px 0 1px;
  font-size: 12px;
  line-height: 14px;
}

.group {
  background: #000;
  padding: 2px 1px 0 2px;
  margin-bottom: 3px;
}

.group label {
  display: flex;
  padding-bottom: 2px;
}

.group input {
  appearance: none;
  width: 14px;
  height: 14px;
  background: #fff;
  box-shadow: inset 0 0 0 2px #fff, inset 0 0 0 4px #000;
}

.group i {
  width: 14px;
  margin: 0 2px;
}

.active input {
  box-shadow: inset 0 0 0 2px #0a0aa8, inset 0 0 0 4px #000;
}

.active i {
  background: #f00;
}

.group span {
  flex: 1;
  height: 14px;
  padding-left: 2px;
  background: #9bdadb;
  overflow: hidden;
}

.group b {
  float: right;
  font-size: 8px;
}

.group .white { background: #fff; }
.group .jade { background: #00a67c; }
.group .orange { background: #ffc44c; }
.group .slate { background: #9bb3bd; }
.group .gray { background: #d8d8dc; }

.selected {
  height: 20px;
  margin-top: 5px;
  border: 1px solid #000;
  background: #ffc44c;
  font-size: 12px;
  line-height: 18px;
  padding-left: 2px;
}

.canvas {
  flex: 1;
  min-width: 0;
  background: #000;
  overflow: hidden;
}

.canvas svg {
  display: block;
}

.rightbar {
  width: 156px;
  display: flex;
  flex-direction: column;
  background: #000;
  border-left: 2px solid #2a7060;
}

.tools {
  height: 410px;
  background: linear-gradient(#9bc8d8 0 8%, #7fa9cc 20%, #b06a80 26%, #8fb0d0 40%, #4a5ad0 65%, #b0a060 92%, #222);
}

.overview {
  flex: 1;
}

.coords {
  border-top: 2px solid #a4ebd8;
  border-bottom: 2px solid #a4ebd8;
  background: #52ceae;
  padding: 8px 2px 5px;
  line-height: 15px;
}

/* scroll bars */
.vscroll, .hscroll {
  display: flex;
  background: #46a991;
  border: 2px solid;
  border-color: #2a7060 #a4ebd8 #a4ebd8 #2a7060;
}

.vscroll {
  width: 14px;
  flex: none;
  flex-direction: column;
}

.hscroll {
  height: 14px;
}

.vscroll .up, .vscroll .down {
  height: 12px;
  background: linear-gradient(100deg, #a4ebd8 40%, #2a7060 60%);
  clip-path: polygon(50% 0, 100% 100%, 0 100%);
}

.vscroll .down {
  clip-path: polygon(0 0, 100% 0, 50% 100%);
}

.hscroll .left, .hscroll .right {
  width: 12px;
  background: linear-gradient(#a4ebd8 40%, #2a7060 60%);
  clip-path: polygon(0 50%, 100% 0, 100% 100%);
}

.hscroll .right {
  clip-path: polygon(0 0, 100% 50%, 0 100%);
}

.thumb {
  flex: 1;
  background: #52ceae;
  border: 2px solid;
  border-color: #a4ebd8 #2a7060 #2a7060 #a4ebd8;
}

.vscroll.part .thumb { margin-bottom: 48px; }
.vscroll.low .thumb { margin-top: 168px; }

.pale .vscroll, .hscroll.pale {
  background: #84b7b8;
  border-color: #4f8386 #cff4f4 #cff4f4 #4f8386;
}

.pale .thumb {
  background: #9bdadb;
  border-color: #cff4f4 #4f8386 #4f8386 #cff4f4;
}

.hscroll.part .thumb { margin-right: 90px; }

/* prompt line */
.prompt {
  display: flex;
  height: 34px;
  border-top: 1px solid #000;
  border-bottom: 2px solid #000;
  background: #ffffcd;
  font-size: 12px;
  line-height: 30px;
}

.tool {
  width: 32px;
  padding: 2px 0 0;
  background: #ffffcd;
  border: 2px solid;
  border-color: #fff #b8b48a #b8b48a #fff;
  border-right-color: #000;
  line-height: 0;
}

.tool.on {
  width: 30px;
  padding: 0;
  border: 3px solid #52ceae;
}

.tool svg {
  display: block;
  margin: 0 auto;
}

.bang span {
  display: block;
  width: 17px;
  margin: 0 auto;
  border: 1px solid #000;
  font: bold 18px/20px "Liberation Mono", monospace;
}

.prompt label {
  width: 50px;
  padding-left: 3px;
  white-space: nowrap;
}

.prompt input {
  width: 170px;
  margin-right: 2px;
  border: 3px solid;
  border-color: #8a8868 #c8c59c #c8c59c #8a8868;
  outline: 1px solid #000;
}

.msg {
  flex: 1;
  padding-left: 3px;
  border-left: 2px solid #000;
}

.unit {
  width: 72px;
  padding: 1px 0 1px 6px;
  background: #52ceae;
  border-left: 2px solid #000;
  font-size: 15px;
}

.unit .option {
  height: 29px;
  width: 80px;
  padding-left: 3px;
}

.option {
  display: inline-flex;
  align-items: center;
  background: #9bdadb;
  border: 3px solid;
  border-color: #cff4f4 #4f8386 #4f8386 #cff4f4;
  padding: 0 3px;
}

.option select {
  appearance: none;
  flex: 1;
  min-width: 0;
  white-space: nowrap;
}

.option::after {
  content: "";
  flex: none;
  width: 12px;
  height: 6px;
  border: 2px solid;
  border-color: #cff4f4 #4f8386 #4f8386 #cff4f4;
}

.option.green {
  background: #52ceae;
  border-color: #a4ebd8 #2a7060 #2a7060 #a4ebd8;
}

.unit .option::after {
  margin-right: 10px;
}

.option.lime {
  background: #18e818;
  border-color: #8cf48c #0f8f0f #0f8f0f #8cf48c;
}

.status {
  height: 30px;
  padding: 1px 0 1px 1px;
  border: 1px solid #000;
  background: #dffafa;
}

.status div {
  height: 100%;
  background: #b0ffff;
  border-bottom: 3px solid #5b9090;
  border-top: 2px solid #e6ffff;
}

/* taskbar */
.taskbar {
  height: 41px;
  display: flex;
  align-items: stretch;
  gap: 4px;
  padding-left: 8px;
  border-top: 1px solid #8fa9c8;
  background: linear-gradient(#65809f, #183a66 30%, #062a58);
}

.taskbar > button {
  width: 58px;
  display: flex;
  align-items: center;
  justify-content: center;
  border: 1px solid #7f9bbb;
  border-radius: 3px;
  background: linear-gradient(150deg, #90a9c6, #3b5b84 50%, #2a4a76 51%, #46688f);
}

.taskbar > .orb {
  width: 40px;
  margin-right: 8px;
  border: none;
  background: none;
}

.taskbar > .stack {
  box-shadow: 2px 0 0 #24446e, 3px 0 0 #7f9bbb;
}

.tray {
  position: relative;
  margin-left: auto;
  padding: 8px 12px 0 0;
}

.qmark {
  position: absolute;
  left: 27px;
  top: 10px;
  font: bold 13px/16px "Open Sans", sans-serif;
  color: #fff;
}

.clock {
  width: 64px;
  padding-top: 2px;
  font: 12px/18px "Open Sans", sans-serif;
  color: #fff;
  text-align: center;
}

.taskbar > .peek {
  width: 14px;
  margin-left: 2px;
  border-radius: 0;
  background: #29486f;
}

/* glass windows */
.win {
  position: absolute;
  display: flex;
  flex-direction: column;
  padding: 0 7px 5px 6px;
  border: 1px solid rgba(210, 220, 225, .75);
  border-radius: 7px 7px 6px 6px;
  background: linear-gradient(100deg, rgba(120, 120, 120, .25), rgba(40, 40, 40, .2) 60%, rgba(160, 160, 160, .25));
  backdrop-filter: blur(4px);
  box-shadow: 0 0 6px rgba(0, 0, 0, .7);
}

.wtitle {
  height: 28px;
  padding-bottom: 2px;
  display: flex;
  align-items: center;
  gap: 5px;
  font: 12px/20px "Open Sans", sans-serif;
  position: relative;
}

.wtitle span {
  background: radial-gradient(rgba(200, 200, 200, .55) 40%, rgba(200, 200, 200, .3));
  box-shadow: 0 0 8px 4px rgba(200, 200, 200, .35);
  line-height: 14px;
}

.x {
  position: absolute;
  right: -2px;
  top: -1px;
  width: 48px;
  height: 20px;
  border: 1px solid rgba(220, 235, 245, .8);
  border-radius: 0 0 5px 5px;
  font: bold 15px/12px "Open Sans", sans-serif;
  padding-bottom: 4px;
  color: #fff;
  text-shadow: 0 0 2px #000, 0 0 2px #000;
}

.wbody {
  flex: 1;
  min-height: 0;
  display: flex;
  flex-direction: column;
  border: 1px solid #000;
  outline: 1px solid rgba(220, 230, 235, .7);
  background: #9bdadb;
}

.viewer {
  left: 126px;
  top: 244px;
  width: 509px;
  height: 714px;
}

.histo {
  right: 119px;
  top: 180px;
  width: 482px;
  height: 576px;
  background: linear-gradient(90deg, rgba(200, 200, 200, .2), rgba(120, 140, 150, .2) 40%, rgba(140, 200, 240, .5));
}

.checklist {
  right: 1px;
  top: 79px;
  width: 398px;
  height: 725px;
}

.check-title {
  height: 30px;
  padding: 2px;
  border-bottom: 2px solid #000;
  font: bold 15px/22px "Liberation Serif", serif;
  text-align: center;
}

.check-title span {
  display: block;
  background: #52ceae;
  border: 2px solid;
  border-color: #a4ebd8 #2a7060 #2a7060 #a4ebd8;
}

.cols {
  flex: 1;
  min-height: 0;
  display: flex;
  background: #52ceae;
}

.lcol {
  width: 171px;
  display: flex;
  flex-direction: column;
  border-right: 3px solid #000;
}

.lhead {
  display: flex;
  height: 30px;
  font-style: italic;
  border-bottom: 1px solid #000;
}

.lhead button {
  margin: 2px;
  flex: 5;
  font-weight: normal;
  line-height: 18px;
}

.lhead button:last-child {
  flex: 4;
}

.lhead b {
  flex: 9;
  line-height: 28px;
  text-align: center;
  background: #9bdadb;
  border: 1px solid #000;
}

.pane {
  flex: 1;
  min-height: 0;
  display: flex;
  gap: 5px;
}

.list {
  flex: 1;
  padding: 2px 5px 2px 3px;
  overflow: hidden;
  border: 2px solid;
  border-color: #2a7060 #a4ebd8 #a4ebd8 #2a7060;
}

.list li {
  height: 15px;
  margin-bottom: 3px;
  line-height: 15px;
  white-space: nowrap;
}

.list .sel {
  background: #000;
  color: #6fd8be;
}

.pale .list {
  border-color: #4f8386 #cff4f4 #cff4f4 #4f8386;
}

.pale .sel {
  color: #9bdadb;
}

.lcol .hscroll, .rcol .hscroll {
  margin: 4px 19px 2px 0;
  flex: none;
}

.replace {
  height: 32px;
  padding: 1px 2px 1px 6px;
  border-top: 1px solid #000;
}

.replace .option {
  width: 100%;
  height: 30px;
}

.rcol {
  flex: 1;
  min-width: 0;
  display: flex;
  flex-direction: column;
}

.rhead {
  display: flex;
  height: 31px;
  padding: 1px 2px 1px 1px;
  background: #9bdadb;
  line-height: 29px;
}

.rhead button {
  flex: 1;
  font-style: italic;
  line-height: 20px;
}

.rhead .option {
  width: 61px;
  margin-left: 6px;
}

.rcol .pane {
  padding-right: 2px;
}

.rcol .list {
  padding-top: 3px;
}

.navrow {
  display: flex;
  gap: 3px;
  height: 27px;
  line-height: 24px;
}

.navrow button {
  width: 45px;
  margin-bottom: 2px;
  white-space: nowrap;
  line-height: 19px;
}

.navrow .first {
  width: 56px;
  margin: 0;
  outline: 2px solid #000;
  outline-offset: -2px;
}

.navrow label {
  flex: 1;
}

.navrow input {
  width: 60px;
  margin: 0 2px 3px 0;
  padding-left: 6px;
  border: 2px solid;
  border-color: #2a7060 #a4ebd8 #a4ebd8 #2a7060;
}

.zoomrow {
  display: flex;
  height: 33px;
}

.cell {
  display: flex;
  border: 1px solid #000;
  padding: 2px 0 2px 5px;
}

.cell .option {
  width: 116px;
}

.sv {
  padding: 0;
  background: #9bdadb;
  line-height: 30px;
}

.sv .option {
  width: 67px;
  outline: 1px solid #18e818;
}

.showall {
  display: flex;
  align-items: center;
  gap: 4px;
  padding: 0 0 6px 4px;
  white-space: nowrap;
}

.showall input {
  appearance: none;
  width: 13px;
  height: 13px;
  border: 1px solid;
  border-color: #a4ebd8 #2a7060 #2a7060 #a4ebd8;
}

.iconrow {
  display: flex;
  justify-content: flex-end;
  gap: 4px;
  padding: 1px 2px;
  height: 33px;
}

.ibtn {
  flex: none;
  width: 30px;
  height: 30px;
  line-height: 0;
}

.ibtn svg {
  display: block;
}

.ibtn.undo {
  width: 34px;
}

.measure {
  height: 22px;
  border-top: 3px solid #000;
  background: #52ceae;
  line-height: 19px;
  text-align: center;
}

.erf {
  height: 21px;
  padding-left: 1px;
  border-top: 2px solid #000;
  border-bottom: 1px solid #000;
  background: #ffffcd;
  line-height: 19px;
}

.closerow {
  display: flex;
  gap: 4px;
  padding: 1px;
}

.closerow .close {
  flex: 1;
}

/* checklist editor */
.checklist .wbody, .cname {
  font-family: "Liberation Serif", serif;
  font-size: 15px;
}

.cmenu {
  height: 35px;
  padding: 1px;
  border-bottom: 1px solid #000;
  font-size: 14px;
}

.cmenu div {
  display: inline-flex;
  gap: 17px;
  height: 33px;
  padding: 0 10px;
  outline: 1px solid #000;
}

.cname {
  height: 20px;
  line-height: 19px;
  text-align: center;
  border-bottom: 1px solid #000;
}

.citems-wrap {
  flex: 1;
  min-height: 0;
  display: flex;
  gap: 4px;
  padding: 1px 2px 1px 1px;
  background: #52ceae;
}

.citems {
  flex: 1;
  overflow: hidden;
  border: 2px solid;
  border-color: #2a7060 #a4ebd8 #a4ebd8 #2a7060;
  padding-right: 1px;
}

.citems article {
  display: flex;
  flex-direction: column;
  align-items: flex-end;
  height: 119px;
  background: #9bdadb;
  border-bottom: 3px solid #000;
  border-right: 1px solid #000;
}

.r1 {
  display: flex;
  align-items: center;
  width: 100%;
  justify-content: flex-end;
  height: 30px;
  padding-right: 2px;
}

.r1 input[type=text] {
  width: 103px;
  height: 30px;
  margin-right: 4px;
  padding: 0 3px 10px 5px;
  border: 2px solid;
  border-color: #4f8386 #cff4f4 #cff4f4 #4f8386;
  font: 15px "Liberation Mono", monospace;
}

.r1 input[type=checkbox] {
  width: 13px;
  height: 13px;
  margin-left: 5px;
  accent-color: #c01060;
}

.ico {
  width: 20px;
  height: 20px;
  margin: 0 6px 0 20px;
  background: #f0a030;
}

.r1 b {
  flex: 1;
  white-space: nowrap;
  overflow: hidden;
}

.erfbtn {
  width: 43px;
  height: 28px;
  margin-right: 5px;
}

.q {
  width: 30px;
  height: 30px;
  padding: 1px;
}

.q span {
  display: block;
  border: 1px solid #000;
  font: bold 21px/20px "Liberation Sans", sans-serif;
}

.online {
  width: 136px;
  height: 24px;
  margin: 4px 2px 2px 0;
  line-height: 17px;
  padding-left: 18px;
}

.r3 {
  display: flex;
  height: 34px;
  gap: 2px;
  align-items: center;
}

.r3 .ibtn {
  padding: 1px;
}

.flag {
  width: 17px;
  height: 34px;
  background: #f81818;
  border: 1px solid #000;
  font-style: normal;
  line-height: 30px;
  text-align: center;
}

.flag.ok {
  background: #18e818;
}

.citems p {
  width: 100%;
  flex: 1;
  background: #ffffcd;
  border-top: 1px solid #000;
  font: 15px/21px "Liberation Mono", monospace;
  text-align: right;
  padding-right: 36px;
}

.citems .far {
  padding-right: 63px;
}

.cclose {
  height: 26px;
  margin: 3px 2px 1px;
}

/* histogram */
.histo .wbody {
  background: #52ceae;
}

.hgrid {
  display: flex;
  gap: 3px;
  padding: 3px 4px 0 3px;
  height: 294px;
}

.hleft {
  width: 102px;
  display: flex;
  flex-direction: column;
  background: #9bdadb;
  border: 1px solid #000;
}

fieldset {
  margin: 0;
  padding: 1px 0 0 4px;
  border: 1px solid #000;
  height: 138px;
}

fieldset label {
  display: flex;
  align-items: center;
  gap: 7px;
  height: 27px;
}

fieldset input {
  appearance: none;
  width: 11px;
  height: 11px;
  margin-left: 2px;
  border: 2px solid;
  border-color: #cff4f4 #4f8386 #4f8386 #cff4f4;
  transform: rotate(45deg);
}

fieldset input:checked {
  background: #c80050;
  border-color: #4f8386 #fff #fff #4f8386;
}

.hicons {
  display: flex;
  gap: 4px;
  padding: 3px 2px 2px;
}

.hright {
  flex: 1;
  min-width: 0;
  display: flex;
  flex-direction: column;
  background: #9bdadb;
  border: 1px solid #000;
  border-right: 2px solid #cff4f4;
}

.chart {
  height: 221px;
  display: flex;
  flex-direction: column;
}

.chart h3 {
  align-self: center;
  height: 22px;
  padding: 0 3px;
  margin-top: 3px;
  border: 1px solid #000;
  background: #b0ffff;
  box-shadow: 2px 2px 0 #5f8f90;
  font-style: italic;
  line-height: 23px;
}

.bars {
  flex: 1;
  display: flex;
  align-items: flex-end;
  padding: 0 8px 0 6px;
  border-bottom: 4px solid #000;
}

.bar {
  flex: 1;
  min-width: 0;
  display: flex;
  flex-direction: column;
  align-items: center;
  line-height: 15px;
}

.bar i {
  align-self: stretch;
  border: 1px solid #000;
  border-bottom: none;
  margin-right: -1px;
  background: #b0ffff;
}

.bar.red span {
  color: #e01818;
}

.ranges {
  display: flex;
  height: 29px;
  margin: 1px 8px 7px 6px;
  line-height: 15px;
}

.ranges p {
  flex: 1;
  min-width: 0;
  padding: 2px 0 0 2px;
  margin-right: -1px;
  border: 1px solid #000;
  background: #b0ffff;
  white-space: nowrap;
}

.ranges span {
  display: block;
  padding-left: 9px;
}

.res {
  flex: 1;
  min-height: 0;
  display: flex;
  border-top: 2px solid #000;
}

.res .pane {
  flex: none;
  width: 75px;
}

.res .list {
  padding-right: 0;
}

.res .sel {
  width: 46px;
}

.slider {
  flex: 1;
  display: flex;
  flex-direction: column;
  border: 1px solid #000;
  border-right: 3px solid #000;
  border-bottom: 3px solid #000;
  padding: 0 3px;
}

.slider label {
  height: 23px;
  line-height: 19px;
  text-align: center;
}

.slider output {
  padding-left: 4px;
  height: 19px;
}

.slider input {
  appearance: none;
  height: 15px;
  background: #84b7b8;
  border: 2px solid;
  border-color: #4f8386 #cff4f4 #cff4f4 #4f8386;
}

.slider input::-webkit-slider-thumb {
  appearance: none;
  width: 30px;
  height: 11px;
  background: linear-gradient(90deg, #9bdadb 13px, #4f8386 13px 14px, #cff4f4 14px 15px, #9bdadb 15px);
  border: 1px solid;
  border-color: #cff4f4 #4f8386 #4f8386 #cff4f4;
}

.split {
  height: 7px;
  display: flex;
  justify-content: flex-end;
  background: linear-gradient(#52ceae 3px, #2a7060 3px 4px, #a4ebd8 4px 5px, #52ceae 5px);
  padding-right: 12px;
}

.split i {
  width: 8px;
  height: 7px;
  border: 1px solid;
  border-color: #a4ebd8 #2a7060 #2a7060 #a4ebd8;
  background: #52ceae;
}

.map {
  flex: 1;
  min-height: 0;
  margin: 0 4px 3px 2px;
  border: 1px solid #000;
  outline: 1px solid #2a7060;
  display: flex;
  align-items: center;
  justify-content: center;
}

.board {
  width: 254px;
  height: 122px;
  border: 2px solid #000;
  background: #9bdadb;
}

.hbottom {
  display: flex;
  gap: 4px;
  height: 45px;
  padding: 0 4px 4px;
}

.hbottom .ibtn {
  height: 38px;
  margin-top: 1px;
  padding-top: 4px;
}

.hbottom p {
  flex: 1;
  padding-left: 2px;
  border: 1px solid #000;
  background: #9bdadb;
  line-height: 39px;
}

.hbottom p ~ .ibtn {
  width: 38px;
  padding: 0;
}

.hclose {
  height: 27px;
  outline: 1px solid #000;
}
```
